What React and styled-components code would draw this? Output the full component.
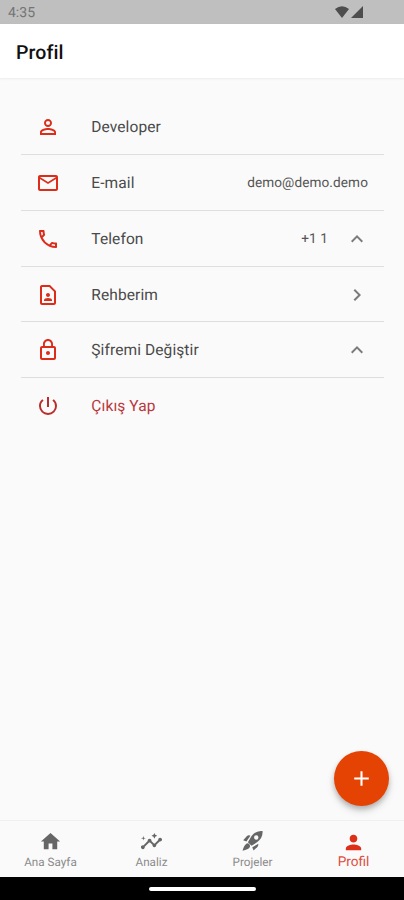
import React from "react";
import styled, { createGlobalStyle } from "styled-components";
import {
  MdPersonOutline, MdMailOutline, MdOutlinePhone, MdOutlineContactPage, MdLockOutline,
  MdPowerSettingsNew, MdExpandLess, MdChevronRight, MdHome, MdInsights,
  MdPerson, MdAdd,
} from "react-icons/md";

const GlobalStyle = createGlobalStyle`
  * { box-sizing: border-box; }
  body { margin: 0; background: #fafafa; font-family: Roboto, "Noto Sans", sans-serif; text-rendering: geometricPrecision; }
  svg { display: block; flex: none; }
`;

const Screen = styled.div`
  position: relative;
  display: flex;
  flex-direction: column;
  width: 404px;
  height: 900px;
  overflow: hidden;
  background: #fafafa;
`;

const StatusBar = styled.div`
  display: flex;
  justify-content: space-between;
  align-items: center;
  height: 24px;
  flex: none;
  padding: 2px 41px 0 8px;
  background: #bfbfbf;
  color: #747474;
  font-size: 14px;
`;

const Signals = styled.div`
  display: flex;
  gap: 2px;
  margin-top: -2px;
  color: #4d4d4d;
`;

const AppBar = styled.header`
  display: flex;
  align-items: center;
  height: 54px;
  flex: none;
  padding: 2px 16px 0;
  background: #fff;
  box-shadow: 0 1px 2px rgba(0, 0, 0, 0.06);
`;

const Title = styled.h1`
  margin: 0;
  color: #111;
  font-size: 19.5px;
  font-weight: 500;
  letter-spacing: 0.1px;
`;

const List = styled.main`
  flex: 1;
  padding: 21.4px 20px 0 21px;
`;

const Row = styled.div`
  display: flex;
  align-items: center;
  height: 55.75px;
  padding: ${(p) => (p.$last ? "0 16px 0 15px" : "1px 16px 0 15px")};
  border-bottom: ${(p) => (p.$last ? "0" : "1px solid #dedede")};
  color: ${(p) => (p.$danger ? "#b9383e" : "#4a4a4a")};
`;

const RowIcon = styled.span`
  color: ${(p) => (p.$danger ? "#bd2c2c" : "#dc2d1b")};
  font-size: 24px;
`;

const Label = styled.span`
  flex: 1;
  margin-left: 31.3px;
  font-size: 15.5px;
  letter-spacing: 0.1px;
`;

const Value = styled.span`
  color: #555;
  font-size: 13.6px;
  letter-spacing: 0.1px;
`;

const Arrow = styled.span`
  margin: 0 -1px 0 17px;
  color: #7b7b7b;
  font-size: 24px;
`;

const Fab = styled.button`
  position: absolute;
  right: 15px;
  bottom: 94px;
  display: flex;
  align-items: center;
  justify-content: center;
  width: 55px;
  height: 55px;
  padding: 0;
  border: 0;
  border-radius: 50%;
  background: #e54304;
  color: #fff;
  font-size: 25px;
  box-shadow: 0 3px 5px rgba(0, 0, 0, 0.2), 0 5px 9px rgba(0, 0, 0, 0.13);
`;

const TabBar = styled.nav`
  display: grid;
  grid-template-columns: repeat(4, 1fr);
  height: 57px;
  flex: none;
  border-top: 1px solid #f0f0f0;
  background: #fafafa;
`;

const Tab = styled.div`
  display: flex;
  flex-direction: column;
  align-items: center;
  padding-top: ${(p) => (p.$active ? "9.5px" : "9px")};
  color: ${(p) => (p.$active ? "#dd3018" : "#666")};
  font-size: 23px;
`;

const TabLabel = styled.span`
  margin-top: ${(p) => (p.$active ? "0" : "2px")};
  color: ${(p) => (p.$active ? "#df4c40" : "#8b8b8b")};
  font-size: ${(p) => (p.$active ? "13.6px" : "11.7px")};
  line-height: ${(p) => (p.$active ? "17px" : "15px")};
`;

const SystemBar = styled.div`
  display: flex;
  justify-content: center;
  align-items: center;
  height: 23px;
  flex: none;
  background: #000;
`;

const HomeHandle = styled.div`
  width: 107px;
  height: 4px;
  border-radius: 2px;
  background: #fff;
`;

function RocketIcon() {
  return (
    <svg width="23" height="23" viewBox="0 0 22 22" fill="currentColor">
      <path
        fillRule="evenodd"
        d="M20.6 1C15.8.7 12.2 2.8 9.8 6.3L6.6 11.6L10.1 15.1L15.3 11.8C18.9 9.3 21 5.8 20.6 1ZM14.6 5.1A2.1 2.1 0 1 1 14.6 9.3A2.1 2.1 0 1 1 14.6 5.1Z"
      />
      <path d="M7.9 5.1L9 5.4L5.2 11L2.1 9.7L5.3 6.1Q6.5 5 7.9 5.1Z" />
      <path d="M16.6 13.2L16.5 14.5Q16.3 15.6 15.4 16.5L12 19.5L10.8 16.6Z" />
      <path d="M5.1 13.1Q6.6 12.2 8 13.6Q9.5 15.3 8.2 16.8Q6.9 18.8 1.5 19.9Q2.6 14.9 5.1 13.1Z" />
    </svg>
  );
}

const ROWS = [
  { icon: MdPersonOutline, label: "Developer" },
  { icon: MdMailOutline, label: "E-mail", value: "demo@demo.demo" },
  { icon: MdOutlinePhone, label: "Telefon", value: "+1 1", arrow: MdExpandLess },
  { icon: MdOutlineContactPage, label: "Rehberim", arrow: MdChevronRight },
  { icon: MdLockOutline, label: "Şifremi Değiştir", arrow: MdExpandLess },
  { icon: MdPowerSettingsNew, label: "Çıkış Yap", danger: true },
];

const TABS = [
  { icon: MdHome, label: "Ana Sayfa" },
  { icon: MdInsights, label: "Analiz" },
  { icon: RocketIcon, label: "Projeler" },
  { icon: MdPerson, label: "Profil", active: true },
];

export default function App() {
  return (
    <>
      <GlobalStyle />
      <Screen>
        <StatusBar>
          <span>4:35</span>
          <Signals>
            <svg width="14" height="12" viewBox="0 0 14 12" fill="currentColor">
              <path d="M0 3Q7-2.6 14 3L7 12Z" />
            </svg>
            <svg width="12" height="12" viewBox="0 0 12 12" fill="currentColor">
              <path d="M12 0V12H0Z" />
            </svg>
          </Signals>
        </StatusBar>
        <AppBar><Title>Profil</Title></AppBar>
        <List>
          {ROWS.map(({ icon: Icon, label, value, arrow: ArrowIcon, danger }, i) => (
            <Row key={label} $danger={danger} $last={i === ROWS.length - 1}>
              <RowIcon $danger={danger}><Icon /></RowIcon>
              <Label>{label}</Label>
              {value && <Value>{value}</Value>}
              {ArrowIcon && <Arrow><ArrowIcon /></Arrow>}
            </Row>
          ))}
        </List>
        <TabBar>
          {TABS.map(({ icon: Icon, label, active }) => (
            <Tab key={label} $active={active}>
              <Icon />
              <TabLabel $active={active}>{label}</TabLabel>
            </Tab>
          ))}
        </TabBar>
        <SystemBar><HomeHandle /></SystemBar>
        <Fab aria-label="Ekle"><MdAdd /></Fab>
      </Screen>
    </>
  );
}
